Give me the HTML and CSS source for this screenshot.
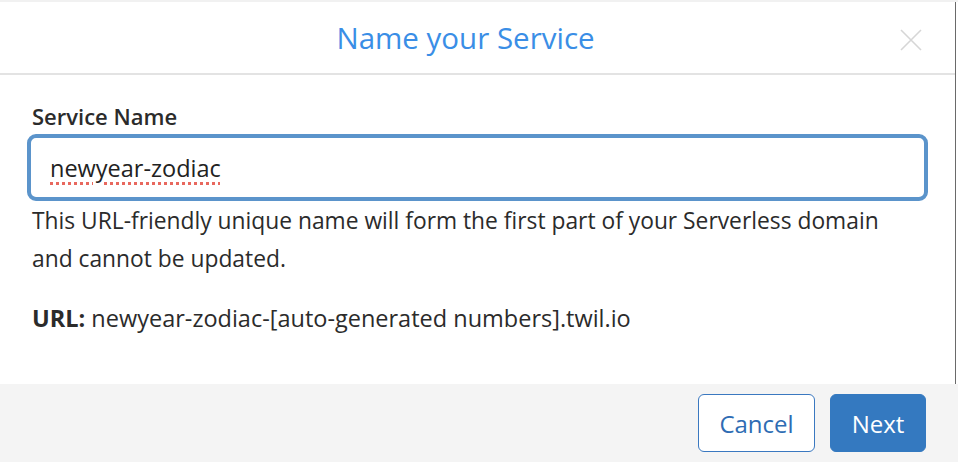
FILE: index.html
```html
<!DOCTYPE html>
<html lang="en">
<head>
    <meta charset="UTF-8">
    <title>Name your Service</title>
    <link rel="stylesheet" href="styles.css">
</head>
<body>
<div class="modal">
    <div class="modal-main">
        <div class="modal-header">
            <h2>Name your Service</h2>
            <button class="close" aria-label="Close">
                <svg width="22" height="22" viewBox="0 0 22 22">
                    <path d="M1 1 L21 21 M21 1 L1 21" stroke="#d6d6d6" stroke-width="1.6" fill="none"/>
                </svg>
            </button>
        </div>

        <div class="modal-body">
            <label class="field-label">Service Name</label>
            <div class="field"><span class="misspelled">newyear-zodiac</span></div>
            <p class="help">This URL-friendly unique name will form the first part of your Serverless domain and cannot be updated.</p>
            <p class="url"><strong>URL:</strong> newyear-zodiac-[auto-generated numbers].twil.io</p>
        </div>
    </div>

    <div class="modal-footer">
        <button class="btn btn-cancel">Cancel</button>
        <button class="btn btn-next">Next</button>
    </div>
</div>
</body>
</html>
```

FILE: styles.css
```css
body {
    margin: 0;
    font-family: "Open Sans", Lato, sans-serif;
    color: #282828;
    background-color: #fff;
}
.modal {
    height: 462px;
    display: flex;
    flex-direction: column;
    border-top: 2px solid #f1f1f1;
    box-sizing: border-box;
}
.modal-main {
    flex: 1;
    margin-right: 2px;
    border-right: 1px solid #6a6a6a;
}
.modal-header {
    height: 71px;
    border-bottom: 2px solid #e3e3e3;
    display: flex;
    align-items: center;
    justify-content: center;
    position: relative;
}
.modal-header h2 {
    margin: 0;
    font-size: 29.5px;
    font-weight: 400;
    color: #3a8ee6;
    padding-right: 24px;
}
.close {
    position: absolute;
    right: 33px;
    top: 27px;
    padding: 0;
    border: none;
    background: none;
    line-height: 0;
}
.modal-body {
    padding: 26px 27px 0 27px;
}
.field-label {
    display: block;
    font-size: 22px;
    font-weight: 600;
    color: #2b2b2b;
    padding-left: 5px;
    line-height: 30px;
}
.field {
    margin-top: 3px;
    height: 59px;
    border: 4px solid #5b94cb;
    border-radius: 9px;
    display: flex;
    align-items: center;
    padding-left: 19px;
    font-size: 23.5px;
    color: #222;
}
.misspelled {
    text-decoration: underline dotted #e8685e;
    text-decoration-thickness: 3px;
    text-underline-offset: 5px;
}
.help {
    margin: 1px 40px 0 5px;
    font-size: 22.8px;
    line-height: 38px;
    color: #2b2b2b;
}
.url {
    margin: 25px 0 0 5px;
    font-size: 23.5px;
    line-height: 30px;
    color: #2b2b2b;
}
.modal-footer {
    height: 78px;
    background-color: #f4f4f4;
    display: flex;
    justify-content: flex-end;
    align-items: center;
    gap: 15px;
    padding-right: 32px;
}
.btn {
    height: 58px;
    font-family: inherit;
    font-size: 24px;
    border-radius: 6px;
    padding: 0;
    cursor: pointer;
}
.btn-cancel {
    background-color: #fff;
    border: 1px solid #3a78c0;
    color: #2e6cb3;
    width: 117px;
}
.btn-next {
    background-color: #3479c0;
    border: 1px solid #3479c0;
    color: #fff;
    width: 96px;
}
```
